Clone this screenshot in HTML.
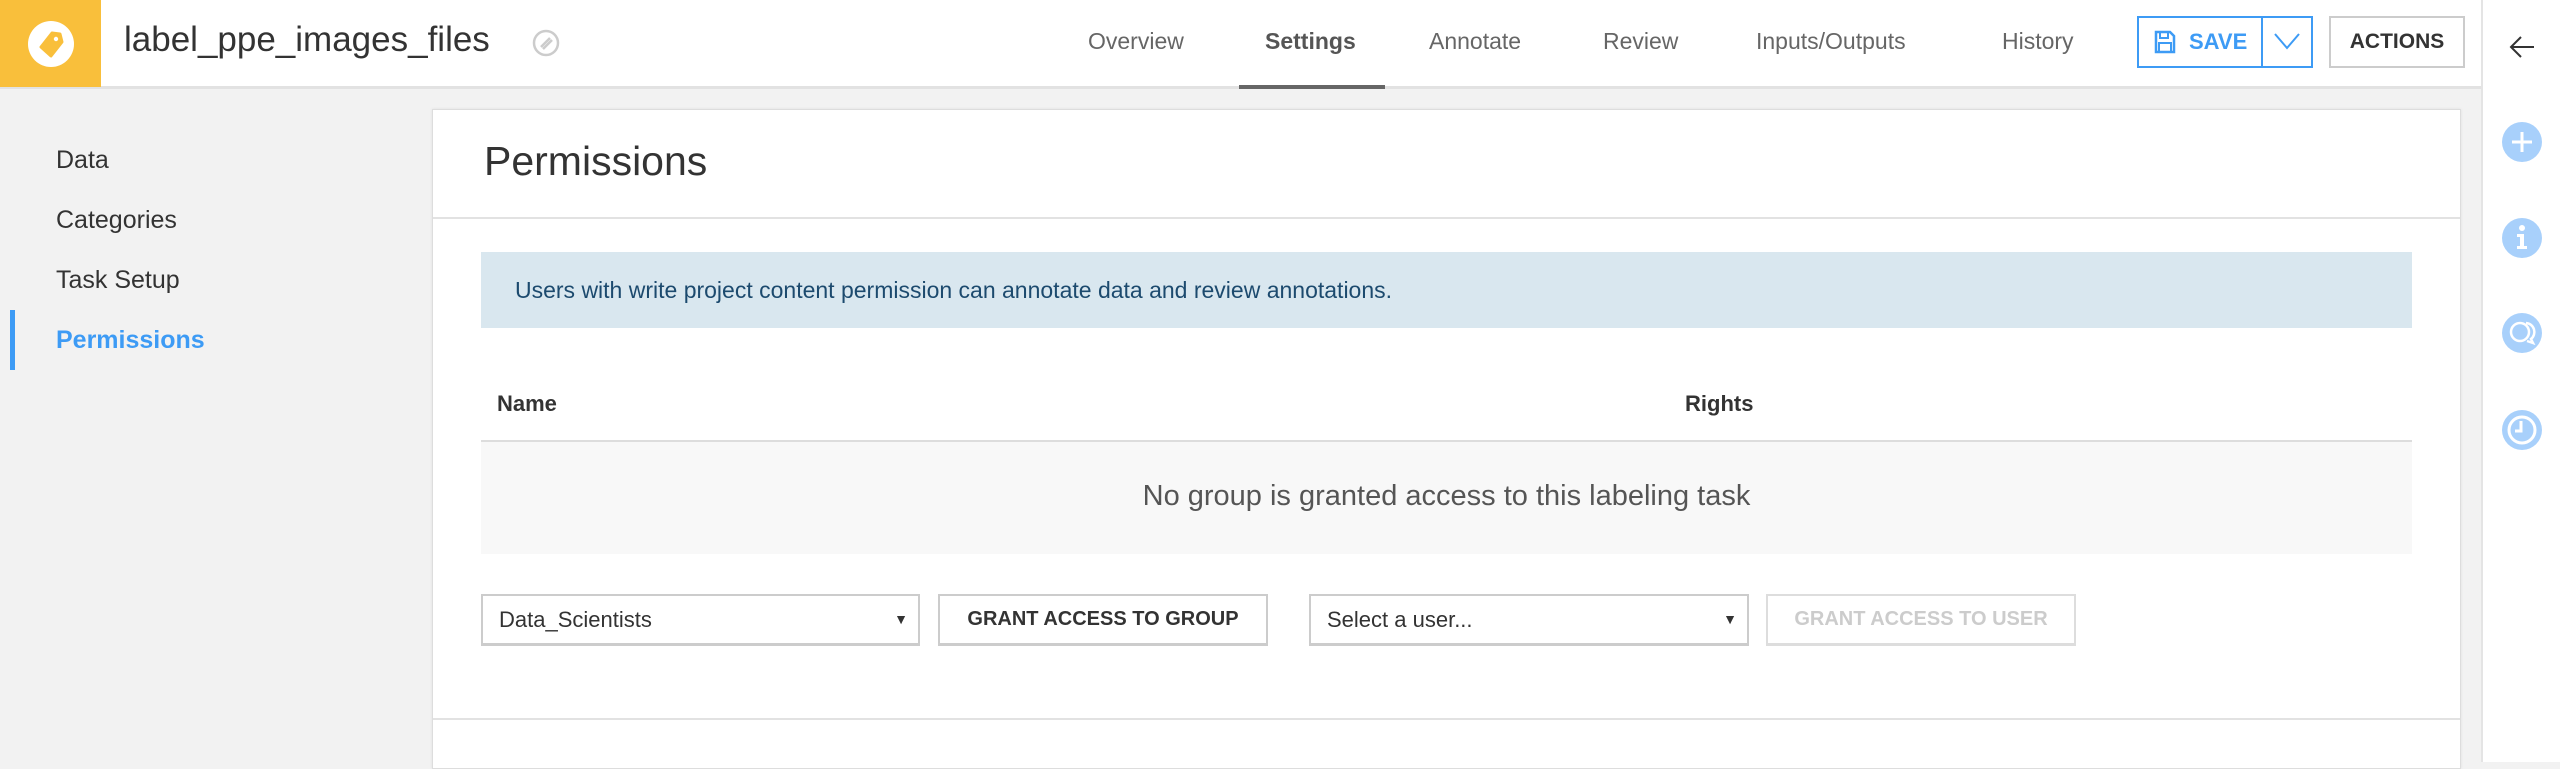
<!DOCTYPE html>
<html><head><meta charset="utf-8"><style>
*{box-sizing:border-box;margin:0;padding:0}
body{width:2560px;height:762px;overflow:hidden;background:#f2f2f2;font-family:"Liberation Sans",sans-serif;position:relative;color:#333}
.a{position:absolute;white-space:nowrap}
.nav{position:absolute;top:28px;font-size:23px;color:#666}
</style></head><body>
<div class="a" style="left:0;top:0;width:2481px;height:89px;background:#fff;border-bottom:3px solid #e2e2e2"></div>
<div class="a" style="left:0;top:0;width:101px;height:87px;background:#f9bf3b"></div>
<svg class="a" style="left:27px;top:20px" width="48" height="48" viewBox="0 0 48 48"><circle cx="24" cy="24" r="23" fill="#fff"/><path d="M14 27 L25 13 L33 14 L35 22 L24 36 Z" fill="#f9bf3b" stroke="#f9bf3b" stroke-linejoin="round" stroke-width="3"/><circle cx="29" cy="19" r="2.2" fill="#fff"/></svg>
<div class="a" style="left:124px;top:20px;font-size:35px;color:#333">label_ppe_images_files</div>
<svg class="a" style="left:531px;top:28px" width="30" height="30" viewBox="0 0 30 30"><circle cx="15" cy="15" r="12" fill="none" stroke="#ccc" stroke-width="2.5"/><path d="M10 19 L19 10 M12 21 L21 12" stroke="#ccc" stroke-width="2.5"/></svg>
<div class="nav" style="left:1088px">Overview</div>
<div class="nav" style="left:1265px;font-weight:bold;color:#555">Settings</div>
<div class="a" style="left:1239px;top:85px;width:146px;height:4px;background:#666"></div>
<div class="nav" style="left:1429px">Annotate</div>
<div class="nav" style="left:1603px">Review</div>
<div class="nav" style="left:1756px">Inputs/Outputs</div>
<div class="nav" style="left:2002px">History</div>
<div class="a" style="left:2137px;top:16px;width:176px;height:52px;border:2px solid #3d9bf5;background:#fff"></div>
<div class="a" style="left:2261px;top:16px;width:2px;height:52px;background:#3d9bf5"></div>
<svg class="a" style="left:2154px;top:30px" width="22" height="24" viewBox="0 0 22 24"><path d="M2 2 H16 L20 6 V22 H2 Z" fill="none" stroke="#3d9bf5" stroke-width="2.5"/><rect x="6" y="2" width="8" height="6" fill="none" stroke="#3d9bf5" stroke-width="2"/><rect x="5" y="13" width="12" height="9" fill="none" stroke="#3d9bf5" stroke-width="2"/></svg>
<div class="a" style="left:2189px;top:29px;font-size:22px;font-weight:bold;color:#3d9bf5">SAVE</div>
<svg class="a" style="left:2273px;top:32px" width="28" height="18" viewBox="0 0 28 18"><path d="M2 2 L14 16 L26 2" fill="none" stroke="#3d9bf5" stroke-width="2"/></svg>
<div class="a" style="left:2329px;top:16px;width:136px;height:52px;border:2px solid #ccc;background:#fff;font-size:21px;font-weight:bold;color:#333;text-align:center;line-height:48px">ACTIONS</div>
<div class="a" style="left:2481px;top:0;width:79px;height:762px;background:#fff;border-left:2px solid #e4e4e4"></div>
<svg class="a" style="left:2508px;top:34px" width="28" height="26" viewBox="0 0 28 26"><path d="M26 13 H3 M13 3 L3 13 L13 23" fill="none" stroke="#333" stroke-width="2"/></svg>
<svg class="a" style="left:2502px;top:122px" width="40" height="40" viewBox="0 0 40 40"><circle cx="20" cy="20" r="20" fill="#a8d0fb"/><path d="M20 10 V30 M10 20 H30" stroke="#fff" stroke-width="3"/></svg>
<svg class="a" style="left:2502px;top:218px" width="40" height="40" viewBox="0 0 40 40"><circle cx="20" cy="20" r="20" fill="#a8d0fb"/><circle cx="20" cy="10" r="3" fill="#fff"/><path d="M15 16 H22 V28 H25 V31 H15 V28 H18 V19 H15 Z" fill="#fff"/></svg>
<svg class="a" style="left:2502px;top:313px" width="40" height="40" viewBox="0 0 40 40"><circle cx="20" cy="20" r="20" fill="#a8d0fb"/><circle cx="18" cy="19" r="9" fill="none" stroke="#fff" stroke-width="2.5"/><path d="M24 10 A9 9 0 0 1 29 26 L31 30 L25 28" fill="none" stroke="#fff" stroke-width="2.5"/></svg>
<svg class="a" style="left:2502px;top:410px" width="40" height="40" viewBox="0 0 40 40"><circle cx="20" cy="20" r="20" fill="#a8d0fb"/><circle cx="20" cy="20" r="13" fill="none" stroke="#fff" stroke-width="3"/><path d="M19 11 V21 H13" fill="none" stroke="#fff" stroke-width="3"/></svg>
<div class="a" style="left:10px;top:310px;width:5px;height:60px;background:#3d9bf5"></div>
<div class="a" style="left:56px;top:146px;font-size:25px">Data</div>
<div class="a" style="left:56px;top:206px;font-size:25px">Categories</div>
<div class="a" style="left:56px;top:266px;font-size:25px">Task Setup</div>
<div class="a" style="left:56px;top:326px;font-size:25px;font-weight:bold;color:#3d9bf5">Permissions</div>
<div class="a" style="left:432px;top:109px;width:2029px;height:660px;background:#fff;border:1px solid #ddd;box-shadow:0 0 3px rgba(0,0,0,.08)"></div>
<div class="a" style="left:484px;top:138px;font-size:41px;color:#333">Permissions</div>
<div class="a" style="left:433px;top:217px;width:2027px;height:2px;background:#e2e2e2"></div>
<div class="a" style="left:481px;top:252px;width:1931px;height:76px;background:#d9e7ef"></div>
<div class="a" style="left:515px;top:277px;font-size:23px;color:#1c4a6e">Users with write project content permission can annotate data and review annotations.</div>
<div class="a" style="left:497px;top:391px;font-size:22px;font-weight:bold">Name</div>
<div class="a" style="left:1685px;top:391px;font-size:22px;font-weight:bold">Rights</div>
<div class="a" style="left:481px;top:440px;width:1931px;height:114px;background:#f8f8f8;border-top:2px solid #ddd"></div>
<div class="a" style="left:481px;top:480px;width:1931px;text-align:center;font-size:29px;color:#555">No group is granted access to this labeling task</div>
<div class="a" style="left:481px;top:594px;width:439px;height:52px;border:2px solid #ccc;border-bottom-width:3px;font-size:22px;line-height:47px;padding-left:16px">Data_Scientists<span style="position:absolute;right:10px;font-size:14px">&#9660;</span></div>
<div class="a" style="left:938px;top:594px;width:330px;height:52px;border:2px solid #ccc;border-bottom-width:3px;font-size:20px;font-weight:bold;line-height:47px;text-align:center">GRANT ACCESS TO GROUP</div>
<div class="a" style="left:1309px;top:594px;width:440px;height:52px;border:2px solid #ccc;border-bottom-width:3px;font-size:22px;line-height:47px;padding-left:16px">Select a user...<span style="position:absolute;right:10px;font-size:14px">&#9660;</span></div>
<div class="a" style="left:1766px;top:594px;width:310px;height:52px;border:2px solid #ddd;border-bottom-width:3px;font-size:20px;font-weight:bold;line-height:47px;text-align:center;color:#ccc">GRANT ACCESS TO USER</div>
<div class="a" style="left:433px;top:718px;width:2027px;height:2px;background:#e2e2e2"></div>
</body></html>
